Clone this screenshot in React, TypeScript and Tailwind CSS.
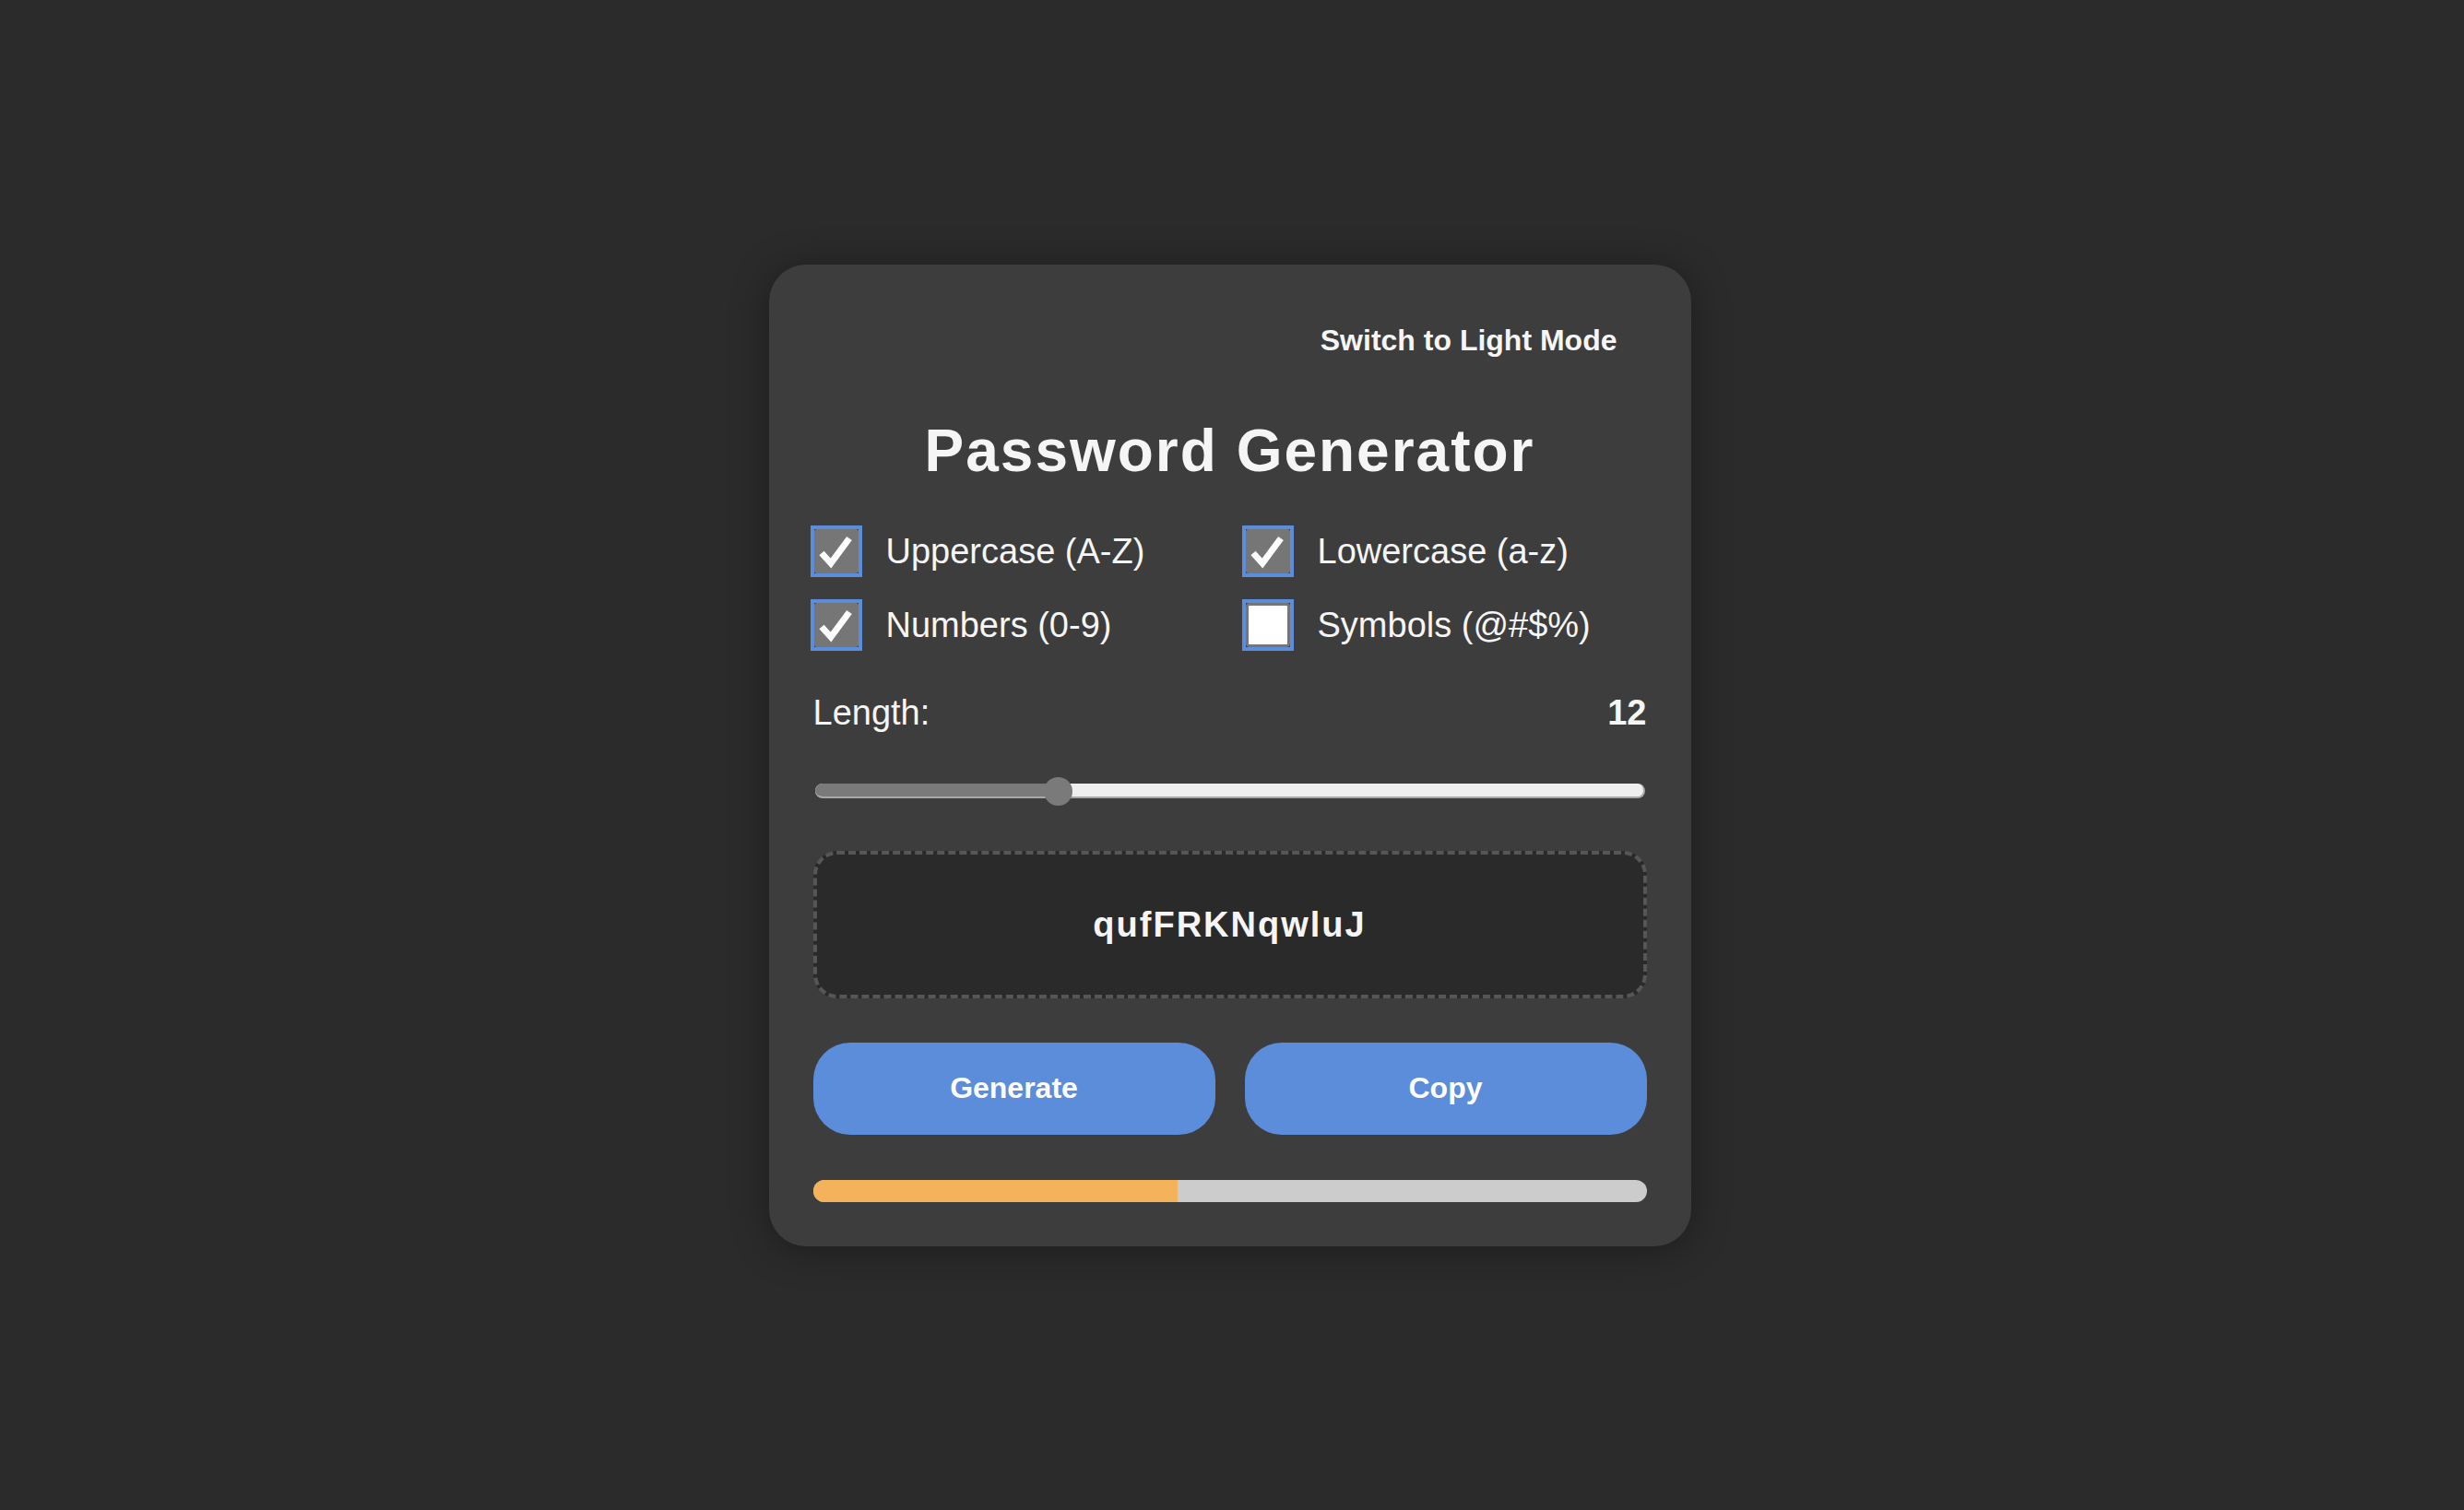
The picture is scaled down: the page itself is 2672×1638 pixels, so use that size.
import React, { useState } from "react";

function Check({ checked }: { checked: boolean }) {
  return (
    <div className="relative w-[56px] h-[56px] shrink-0 border-[4px] border-[#5b8ddb] ml-[-3px]">
      {checked ? (
        <div className="w-full h-full rounded-[3px] bg-[#767676]">
          <svg width="48" height="48" viewBox="0 0 48 48" className="block">
            <path d="M8 26 L18 37 L38 10" fill="none" stroke="#ffffff" strokeWidth="7" strokeLinejoin="miter" strokeLinecap="butt" />
          </svg>
        </div>
      ) : (
        <div className="w-full h-full rounded-[4px] bg-white border-[3px] border-[#767676]" />
      )}
    </div>
  );
}

export default function App() {
  const [opts] = useState([
    { label: "Uppercase (A-Z)", checked: true },
    { label: "Lowercase (a-z)", checked: true },
    { label: "Numbers (0-9)", checked: true },
    { label: "Symbols (@#$%)", checked: false },
  ]);
  const pct = (12 - 4) / (32 - 4);
  return (
    <div
      className="min-h-screen w-full bg-[#2b2b2b] flex items-center justify-center"
      style={{ fontFamily: '"Liberation Sans", Arial, Helvetica, sans-serif' }}
    >
      <div className="w-[1000px] mr-[5px] p-[48px] rounded-[40px] bg-[#3d3d3d] shadow-[0_4px_40px_rgba(0,0,0,0.35)] flex flex-col text-[#f5f5f5]">
        <div className="flex justify-end">
          <button className="px-[32px] py-[16px] text-[32px] leading-[37px] font-bold text-[#f5f5f5] bg-transparent">
            Switch to Light Mode
          </button>
        </div>
        <h1 className="mt-[48px] text-center text-[64px] leading-[74px] font-bold tracking-[2px] text-[#f5f5f5]">
          Password Generator
        </h1>
        <div className="mt-[44px] grid grid-cols-2 gap-x-[32px] gap-y-[24px]">
          {opts.map((o) => (
            <label key={o.label} className="flex items-center gap-[26px] h-[56px]">
              <Check checked={o.checked} />
              <span className="text-[38px] leading-[44px]">{o.label}</span>
            </label>
          ))}
        </div>
        <div className="mt-[45px] flex justify-between items-center text-[38px] leading-[44px]">
          <span>Length:</span>
          <span className="font-bold">12</span>
        </div>
        <div className="mt-[48px] mx-[2px] relative h-[31px] flex items-center">
          <div className="w-full h-[16px] rounded-full bg-[#efefef] border-r-[2px] border-b-[2px] border-[#a8a8a8] overflow-hidden">
            <div className="h-full bg-[#7a7a7a]" style={{ width: `${pct * 100}%` }} />
          </div>
          <div
            className="absolute top-0 w-[31px] h-[31px] rounded-full bg-[#7a7a7a]"
            style={{ left: `calc(${pct} * (100% - 31px))` }}
          />
        </div>
        <div className="mt-[49px] h-[160px] rounded-[26px] border-[4px] border-dashed border-[#565656] bg-[#2a2a2a] flex items-center justify-center">
          <span className="text-[38px] leading-[44px] font-bold tracking-[2px] text-[#f5f5f5]">qufFRKNqwluJ</span>
        </div>
        <div className="mt-[48px] grid grid-cols-2 gap-[32px]">
          <button className="h-[100px] rounded-[40px] bg-[#5b8ddb] text-white text-[32px] leading-[37px] font-bold">
            Generate
          </button>
          <button className="h-[100px] rounded-[40px] bg-[#5b8ddb] text-white text-[32px] leading-[37px] font-bold">
            Copy
          </button>
        </div>
        <div className="mt-[49px] h-[24px] rounded-full bg-[#cccccc] overflow-hidden">
          <div className="h-full bg-[#f4b25a]" style={{ width: "43.8%" }} />
        </div>
      </div>
    </div>
  );
}
